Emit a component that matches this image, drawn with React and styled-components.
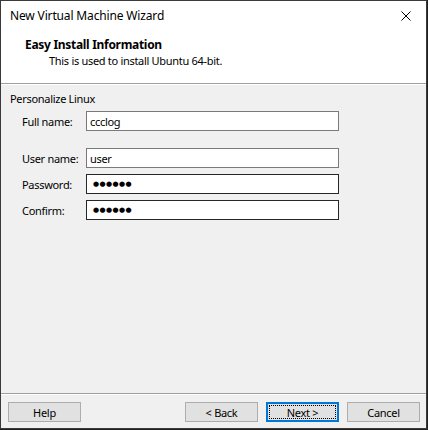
import React from "react";
import styled, { createGlobalStyle } from "styled-components";

const Global = createGlobalStyle`
  * { box-sizing: border-box; }
  html, body { margin: 0; padding: 0; background: #202020; }
  body { font-family: "Noto Sans", "Open Sans", sans-serif; font-size: 11px; letter-spacing: -0.3px; color: #000; }
`;

const Window = styled.div`
  width: 427px;
  height: 429px;
  border: 1px solid #3a3a3a;
  background: #f0f0f0;
  display: flex;
  flex-direction: column;
`;

const WhiteTop = styled.div`
  background: #fff;
  display: flex;
  flex-direction: column;
`;

const TitleBar = styled.div`
  height: 29px;
  display: flex;
  align-items: center;
  justify-content: space-between;
  padding: 0 9px 0 9px;
  font-size: 12px;
  letter-spacing: -0.15px;
`;

const CloseBtn = styled.div`
  width: 20px;
  height: 20px;
  display: flex;
  align-items: center;
  justify-content: center;
  margin-right: 1px;
`;

const Header = styled.div`
  height: 53px;
  padding: 7px 0 0 24px;
  display: flex;
  flex-direction: column;
`;

const HeaderTitle = styled.div`
  font-weight: 700;
  font-size: 12px;
  line-height: 16px;
  letter-spacing: -0.3px;
`;

const HeaderSub = styled.div`
  line-height: 16px;
  margin-left: 24px;
`;

const Etched = styled.div`
  height: 2px;
  border-top: 1px solid #a0a0a0;
  border-bottom: 1px solid #ffffff;
  flex: none;
`;

const Body = styled.div`
  flex: 1;
  padding: 6px 0 0 9px;
  display: flex;
  flex-direction: column;
`;

const GroupTitle = styled.div`
  line-height: 16px;
`;

const Form = styled.div`
  display: grid;
  grid-template-columns: 64px 253px;
  margin-left: 12px;
`;

const Label = styled.label`
  display: flex;
  align-items: center;
  height: 20px;
  margin-top: ${(p) => p.$gap}px;
`;

const Field = styled.div`
  height: 20px;
  margin-top: ${(p) => p.$gap}px;
  background: #fff;
  border: 1px solid ${(p) => (p.$dark ? "#262626" : "#7a7a7a")};
  display: flex;
  align-items: center;
  padding-left: 3px;
`;

const Dots = styled.span`
  font-size: 7px;
  letter-spacing: 0.4px;
  font-family: "DejaVu Sans", sans-serif;
  padding-left: 3px;
`;

const Footer = styled.div`
  display: flex;
  padding: 7px 6px 6px 7px;
  gap: 8px;
`;

const Spacer = styled.div`
  flex: 1;
`;

const Button = styled.button`
  width: 73px;
  height: 20px;
  padding: 0;
  font-family: inherit;
  font-size: 11px;
  letter-spacing: -0.3px;
  color: #000;
  background: #e1e1e1;
  border: 1px solid ${(p) => (p.$default ? "#0078d7" : "#adadad")};
  box-shadow: ${(p) => (p.$default ? "inset 0 0 0 1px #0078d7" : "none")};
  display: flex;
  align-items: center;
  justify-content: center;
  position: relative;
`;

const Focus = styled.span`
  position: absolute;
  inset: 2px;
  border: 1px dotted #000;
`;

function Row({ label, value, gap, dark, password }) {
  return (
    <>
      <Label $gap={gap}>{label}</Label>
      <Field $gap={gap} $dark={dark}>
        {password ? <Dots>{"●●●●●●"}</Dots> : value}
      </Field>
    </>
  );
}

export default function App() {
  return (
    <>
      <Global />
      <Window>
        <WhiteTop>
          <TitleBar>
            <span>New Virtual Machine Wizard</span>
            <CloseBtn>
              <svg width="10" height="10" viewBox="0 0 10 10">
                <path d="M0.5 0.5 L9.5 9.5 M9.5 0.5 L0.5 9.5" stroke="#000" strokeWidth="1" />
              </svg>
            </CloseBtn>
          </TitleBar>
          <Header>
            <HeaderTitle>Easy Install Information</HeaderTitle>
            <HeaderSub>This is used to install Ubuntu 64-bit.</HeaderSub>
          </Header>
        </WhiteTop>
        <Etched />
        <Body>
          <GroupTitle>Personalize Linux</GroupTitle>
          <Form>
            <Row label="Full name:" value="ccclog" gap={4} />
            <Row label="User name:" value="user" gap={17} />
            <Row label="Password:" gap={6} dark password />
            <Row label="Confirm:" gap={6} dark password />
          </Form>
        </Body>
        <Etched />
        <Footer>
          <Button>Help</Button>
          <Spacer />
          <Button>&lt; Back</Button>
          <Button $default>
            <Focus />
            Next &gt;
          </Button>
          <Button>Cancel</Button>
        </Footer>
      </Window>
    </>
  );
}
